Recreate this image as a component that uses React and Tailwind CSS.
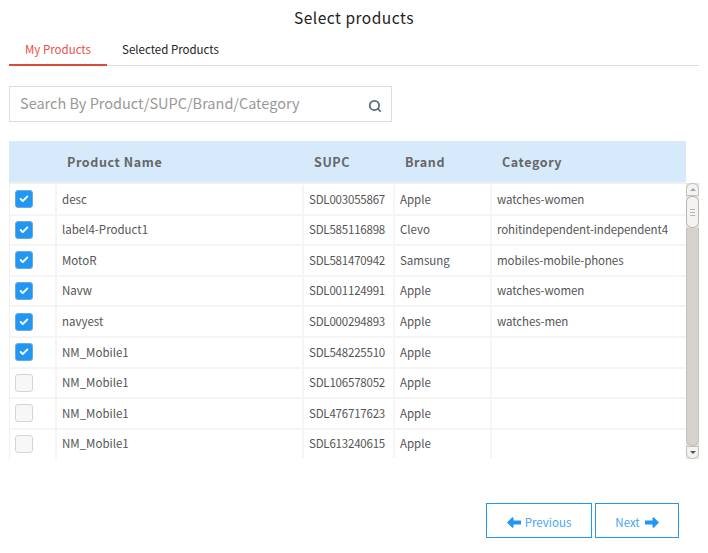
import React from 'react';
import { Search, Check } from 'lucide-react';

const font = { fontFamily: '"Noto Sans CJK SC", "Noto Sans", sans-serif' };

const products = [
  { name: 'desc', supc: 'SDL003055867', brand: 'Apple', category: 'watches-women', checked: true },
  { name: 'label4-Product1', supc: 'SDL585116898', brand: 'Clevo', category: 'rohitindependent-independent4', checked: true },
  { name: 'MotoR', supc: 'SDL581470942', brand: 'Samsung', category: 'mobiles-mobile-phones', checked: true },
  { name: 'Navw', supc: 'SDL001124991', brand: 'Apple', category: 'watches-women', checked: true },
  { name: 'navyest', supc: 'SDL000294893', brand: 'Apple', category: 'watches-men', checked: true },
  { name: 'NM_Mobile1', supc: 'SDL548225510', brand: 'Apple', category: '', checked: true },
  { name: 'NM_Mobile1', supc: 'SDL106578052', brand: 'Apple', category: '', checked: false },
  { name: 'NM_Mobile1', supc: 'SDL476717623', brand: 'Apple', category: '', checked: false },
  { name: 'NM_Mobile1', supc: 'SDL613240615', brand: 'Apple', category: '', checked: false },
];

const ArrowLeft = () => (
  <svg width="14" height="11" viewBox="0 0 14 11" fill="#2196f3">
    <path d="M0 5.5 5.5 0 6.5 1V3.5H14V7.5H6.5V10L5.5 11Z" />
  </svg>
);

const ArrowRight = () => (
  <svg width="14" height="11" viewBox="0 0 14 11" fill="#2196f3">
    <path d="M14 5.5 8.5 0 7.5 1V3.5H0V7.5H7.5V10L8.5 11Z" />
  </svg>
);

const Row = ({ item }) => (
  <div className="flex h-[30.6px] shrink-0 items-center border-b-2 border-[#f5f5f5] text-[11.5px] text-[#555] last:border-b-transparent">
    <div className="flex h-full w-[47px] items-center border-r-2 border-[#f5f5f5] pl-[5px]">
      {item.checked ? (
        <div className="flex h-[18px] w-[18px] items-center justify-center rounded-[3px] border border-[#6fa8dc] bg-[#2196f3]">
          <Check size={10} strokeWidth={4.5} className="text-white" />
        </div>
      ) : (
        <div className="h-[18px] w-[18px] rounded-[3px] border border-[#d5d5d5] bg-[#f7f7f7]" />
      )}
    </div>
    <div className="flex h-full w-[247px] items-center border-r-2 border-[#f5f5f5] pl-[5px]">{item.name}</div>
    <div className="flex h-full w-[91px] items-center border-r-2 border-[#f5f5f5] pl-[5px] tracking-[-0.2px]">{item.supc}</div>
    <div className="flex h-full w-[97px] items-center border-r-2 border-[#f5f5f5] pl-[5px]">{item.brand}</div>
    <div className="flex h-full flex-1 items-center whitespace-nowrap pl-[5px] tracking-[-0.1px]">{item.category}</div>
  </div>
);

const Scrollbar = () => (
  <div className="mt-px flex h-[276px] w-[13px] flex-col bg-[#e4e2de]">
    <div className="flex h-[13px] items-center justify-center rounded-t-[6px] border border-[#c4c1bb] bg-[#f4f3f1]">
      <div className="h-0 w-0 border-x-[3px] border-b-[3px] border-x-transparent border-b-[#a5a5a5]" />
    </div>
    <div className="flex h-[32px] flex-col items-center justify-center gap-[2px] rounded-[6px] border border-[#b9b6b0] bg-[#f4f3f1]">
      <div className="h-px w-[5px] bg-[#b5b5b5]" />
      <div className="h-px w-[5px] bg-[#b5b5b5]" />
      <div className="h-px w-[5px] bg-[#b5b5b5]" />
    </div>
    <div className="flex-1 rounded-b-[6px] border-x border-b border-[#c4c1bb] bg-[#d6d3cd]" />
    <div className="flex h-[13px] items-center justify-center rounded-b-[6px] border border-[#c4c1bb] bg-[#f4f3f1]">
      <div className="h-0 w-0 border-x-[3px] border-t-[3px] border-x-transparent border-t-[#555]" />
    </div>
  </div>
);

export default function App() {
  return (
    <div className="h-[553px] w-[708px] overflow-hidden bg-white" style={font}>
      <h1 className="pt-[6px] pb-px text-center text-[15.5px] leading-[22px] tracking-[0.5px] text-[#222]">Select products</h1>

      <div className="mx-[9px] flex h-[37px] w-[690px] border-b border-[#ddd]">
        <div className="flex h-[37px] w-[98px] items-center justify-center border-b-2 border-[#dd4b39] pt-[6px] text-[11.5px] text-[#e8504a]">
          My Products
        </div>
        <div className="flex h-[36px] w-[127px] items-center justify-center pt-[6px] text-[11.5px] text-[#222]">
          Selected Products
        </div>
      </div>

      <div className="mx-[9px] mt-[20px] flex h-[36px] w-[383px] items-center justify-between border border-[#ddd] pl-[10px] pr-[9px]">
        <span className="-mt-[2px] text-[14.5px] text-[#999]">Search By Product/SUPC/Brand/Category</span>
        <Search size={14} strokeWidth={3} className="mt-[3px] text-[#5a6a7a]" />
      </div>

      <div className="ml-[9px] mt-[19px] flex h-[41px] w-[677px] items-center bg-[#d6eafc] pt-[2px] text-[12.5px] font-bold tracking-[0.6px] text-[#666]">
        <div className="w-[58px]" />
        <div className="w-[247px]">Product Name</div>
        <div className="w-[91px]">SUPC</div>
        <div className="w-[97px]">Brand</div>
        <div>Category</div>
      </div>

      <div className="ml-[9px] flex w-[690px] items-start">
        <div className="flex h-[277px] w-[677px] flex-col overflow-hidden border-l border-t-2 border-[#f0f0f0] pt-px">
          {products.map((item) => (
            <Row key={item.supc} item={item} />
          ))}
        </div>
        <Scrollbar />
      </div>

      <div className="ml-[486px] mt-[44px] flex gap-[3px]">
        <button className="flex h-[35px] w-[106px] items-center justify-center gap-[4px] border border-[#2196f3] pt-[4px] text-[11.5px] text-[#4aa5f5]">
          <ArrowLeft />
          Previous
        </button>
        <button className="flex h-[35px] w-[84px] items-center justify-center gap-[5px] border border-[#2196f3] pt-[4px] text-[11.5px] text-[#4aa5f5]">
          Next
          <ArrowRight />
        </button>
      </div>
    </div>
  );
}
